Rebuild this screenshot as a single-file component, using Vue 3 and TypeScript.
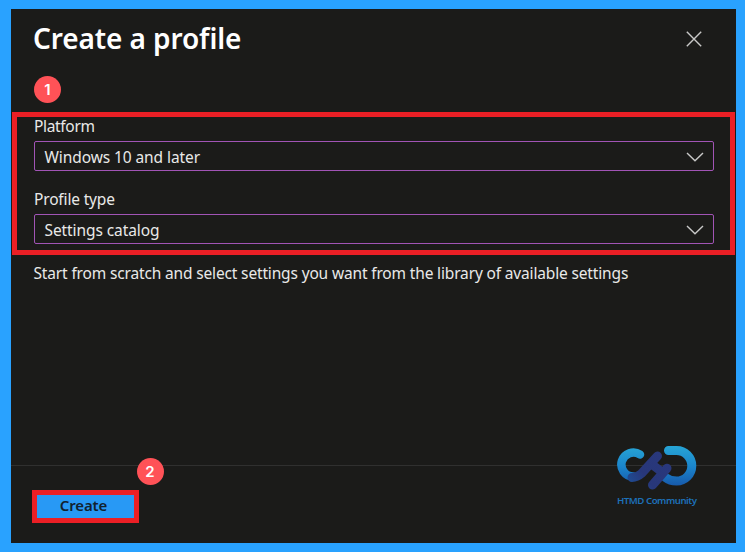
<script setup lang="ts">
interface Field {
  label: string
  value: string
  name: string
}

const fields: Field[] = [
  { label: 'Platform', value: 'Windows 10 and later', name: 'platform' },
  { label: 'Profile type', value: 'Settings catalog', name: 'type' },
]
</script>

<template>
  <main class="frame">
    <section class="panel">
      <header class="head">
        <h1><span>Create a profile</span></h1>
        <button class="close" aria-label="Close">
          <svg width="16" height="16" viewBox="0 0 16 16"><path d="M.8 .8 15.2 15.2M15.2 .8 .8 15.2" /></svg>
        </button>
      </header>
      <div class="step one">1</div>
      <div class="fields">
        <div v-for="f in fields" :key="f.name" class="field">
          <label><span :class="'l-' + f.name">{{ f.label }}</span></label>
          <div class="select">
            <span :class="'v-' + f.name">{{ f.value }}</span>
            <svg width="18" height="10" viewBox="0 0 18 10"><path d="M1 1 9 8.8 17 1" /></svg>
          </div>
        </div>
      </div>
      <p class="hint"><span>Start from scratch and select settings you want from the library of available settings</span></p>
      <footer class="foot">
        <button class="create"><span>Create</span></button>
        <div class="step two">2</div>
        <div class="brand">
          <svg width="80" height="48" viewBox="0 0 80 48">
            <defs>
              <linearGradient id="ring" gradientUnits="userSpaceOnUse" x1="0" y1="2" x2="0" y2="42">
                <stop offset="0" stop-color="#27a5d6" />
                <stop offset=".5" stop-color="#1b86cc" />
                <stop offset="1" stop-color="#1759ab" />
              </linearGradient>
              <linearGradient id="bars" gradientUnits="userSpaceOnUse" x1="12" y1="38" x2="50" y2="10">
                <stop offset="0" stop-color="#1f4c93" />
                <stop offset=".35" stop-color="#28377a" />
                <stop offset="1" stop-color="#29387c" />
              </linearGradient>
            </defs>
            <path d="M23 10.500A12 12 0 1 0 16 32.500" fill="none" stroke="url(#ring)" stroke-width="8.500" stroke-linecap="round" />
            <path d="M51.500 6.500H59.500A15.300 15.300 0 0 1 59.500 37.100C54 37.100 51 35.500 48.500 33.500" fill="none" stroke="url(#ring)" stroke-width="9" stroke-linecap="round" />
            <path d="M40.500 12 24.500 29.500Q20 33.500 15 33.500" fill="none" stroke="url(#bars)" stroke-width="9" stroke-linecap="round" />
            <path d="M50 24.200 35.500 41M35 20.500 45 28" fill="none" stroke="url(#bars)" stroke-width="9" stroke-linecap="round" />
          </svg>
          <div class="brand-name"><span>HTMD Community</span></div>
        </div>
      </footer>
    </section>
  </main>
</template>

<style>
body {
  margin: 0;
  background: #29a2ff;
}
</style>

<style scoped>
.frame {
  box-sizing: border-box;
  width: 745px;
  height: 552px;
  padding: 9px 9px 9px 11px;
  background: #29a2ff;
  font-family: "Noto Sans", "Open Sans", sans-serif;
  color: #e9e9e8;
}
.panel {
  display: flex;
  flex-direction: column;
  height: 534px;
  background: #1b1b19;
}
span {
  white-space: nowrap;
}
.head {
  display: flex;
  justify-content: space-between;
  align-items: center;
  height: 60px;
  padding: 0 34px 0 22px;
}
h1 {
  margin: -2px 0 0;
  font-size: 28px;
  line-height: 40px;
  font-weight: 600;
  letter-spacing: -.1px;
  color: #fff;
}
button {
  border: 0;
  padding: 0;
  background: none;
  font-family: inherit;
}
.close {
  display: flex;
}
svg {
  display: block;
}
.close path,
.select path {
  fill: none;
  stroke: #c9c9c8;
  stroke-width: 1.4;
}
.step {
  box-sizing: border-box;
  width: 27px;
  height: 27px;
  border-radius: 50%;
  background: #ff5257;
  color: #fff;
  font: 600 15px/27px Inter, sans-serif;
  text-align: center;
}
.one {
  margin: 7px 0 0 23px;
}
.fields {
  box-sizing: border-box;
  height: 143px;
  margin: 9px 1px 0 1px;
  border: 5px solid #eb1f25;
  padding: 0 16px 0 17px;
}
.field {
  height: 73px;
}
label {
  display: block;
  height: 24px;
  font-size: 15.500px;
  line-height: 19px;
}
.l-platform {
  letter-spacing: -.33px;
}
.l-type {
  letter-spacing: -.16px;
}
.v-platform,
.v-type {
  letter-spacing: -.09px;
}
.select {
  box-sizing: border-box;
  display: flex;
  align-items: center;
  justify-content: space-between;
  height: 30px;
  border: 1px solid #a154b5;
  border-radius: 2px;
  padding: 1px 9px 0 9.500px;
  font-size: 15.500px;
}
.hint {
  margin: 8px 0 0 22.500px;
  font-size: 15.500px;
  line-height: 20px;
  letter-spacing: -.155px;
}
.foot {
  display: flex;
  align-items: flex-start;
  height: 77px;
  margin: auto 0 0;
  border-top: 1px solid #30302f;
}
.create {
  box-sizing: border-box;
  width: 107px;
  height: 33px;
  margin: 24px 0 0 21px;
  border: 5px solid #eb1f25;
  padding: 0 4px 2px 0;
  background: #2899f5;
  color: #12222f;
  font-size: 15px;
  line-height: 19px;
  font-weight: 600;
  letter-spacing: -.1px;
}
.two {
  margin: -8px 0 0 -2.500px;
}
.brand {
  width: 80px;
  margin: -22px 39px 0 auto;
}
.brand-name {
  margin-top: 2px;
  font-size: 9.700px;
  line-height: 14px;
  font-weight: 600;
  letter-spacing: -.5px;
  color: #1d70b8;
}
</style>
